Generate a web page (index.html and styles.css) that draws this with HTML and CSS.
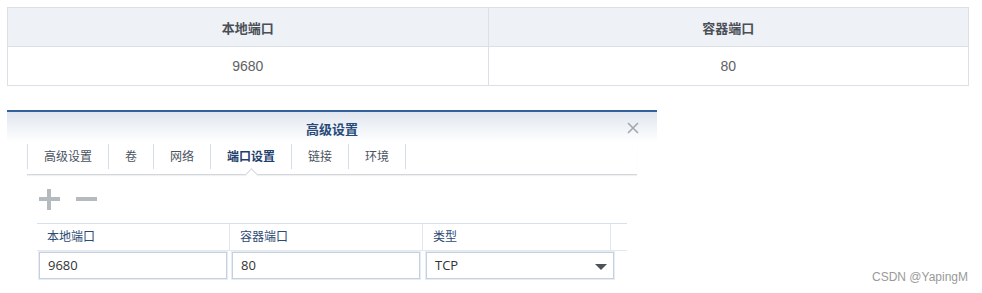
FILE: index.html
```html
<!DOCTYPE html>
<html lang="zh-CN">
<head>
    <meta charset="UTF-8">
    <title>端口设置</title>
    <link rel="stylesheet" href="styles.css">
</head>
<body>
<div class="page">
    <!--上方表格-->
    <table class="ports">
        <thead>
            <tr><th>本地端口</th><th>容器端口</th></tr>
        </thead>
        <tbody>
            <tr><td>9680</td><td>80</td></tr>
        </tbody>
    </table>

    <!--高级设置弹窗-->
    <div class="dialog">
        <div class="dlg-head">
            <span class="dlg-title">高级设置</span>
            <svg class="dlg-close" width="12" height="12" viewBox="0 0 12 12">
                <path d="M1 1L11 11M11 1L1 11" stroke="#a3a8ae" stroke-width="1.6" fill="none"/>
            </svg>
        </div>

        <ul class="tabs">
            <li>高级设置</li>
            <li>卷</li>
            <li>网络</li>
            <li class="active">端口设置</li>
            <li>链接</li>
            <li>环境</li>
        </ul>

        <div class="toolbar">
            <span class="btn-add"></span>
            <span class="btn-del"></span>
        </div>

        <div class="grid">
            <div class="grid-head">
                <div class="cell">本地端口</div>
                <div class="cell">容器端口</div>
                <div class="cell">类型</div>
                <div class="cell"></div>
            </div>
            <div class="grid-row">
                <div class="inp">9680</div>
                <div class="inp">80</div>
                <div class="inp select">TCP<span class="arrow"></span></div>
            </div>
        </div>
    </div>
</div>
<div class="mark">CSDN @YapingM</div>
</body>
</html>
```

FILE: styles.css
```css
*{
    margin: 0;
    padding: 0;
    list-style: none;
    box-sizing: border-box;
}
body{
    width: 982px;
    height: 293px;
    position: relative;
    background: #fff;
    font-family: "Open Sans", "Noto Sans CJK SC", sans-serif;
}
.page{
    padding: 7px;
}

/* 上方表格 */
.ports{
    width: 962px;
    border-collapse: collapse;
    font-family: "Liberation Sans", "Noto Sans CJK SC", sans-serif;
    font-size: 13px;
}
.ports th,
.ports td{
    border: 1px solid #dcdfe6;
    height: 39px;
    text-align: center;
    width: 50%;
}
.ports th{
    background-color: #eef1f5;
    color: #4a4f57;
    font-weight: bold;
}
.ports td{
    font-size: 14px;
    color: #606266;
}

/* 弹窗 */
.dialog{
    width: 650px;
    margin-top: 24px;
    border-top: 2px solid #33619c;
    background: linear-gradient(#e0e6ef, #fff 30px);
}
.dlg-head{
    height: 32px;
    display: flex;
    align-items: center;
    justify-content: center;
    position: relative;
}
.dlg-title{
    font-size: 13px;
    font-weight: bold;
    color: #274a78;
}
.dlg-close{
    position: absolute;
    right: 18px;
    top: 10px;
}

.tabs{
    display: flex;
    margin: 0 20px;
    height: 31px;
    border-bottom: 1px solid #d3d6da;
    box-shadow: 0 1px 1px rgba(0,0,0,.06);
    font-size: 12px;
}
.tabs li{
    position: relative;
    height: 25px;
    line-height: 25px;
    padding: 0 16px;
    border-left: 1px solid #d6dee8;
    color: #4b5460;
}
.tabs li:last-child{
    border-right: 1px solid #d6dee8;
}
.tabs .active{
    color: #1f3f6e;
    font-weight: 600;
}
/* 当前标签下的小箭头 */
.tabs .active::after{
    content: "";
    position: absolute;
    left: 50%;
    bottom: -10px;
    width: 8px;
    height: 8px;
    margin-left: -4px;
    background: #fff;
    border-left: 1px solid #d3d6da;
    border-top: 1px solid #d3d6da;
    transform: rotate(45deg);
}

.toolbar{
    display: flex;
    align-items: center;
    gap: 16px;
    height: 48px;
    padding-left: 32px;
}
.btn-add,
.btn-del{
    position: relative;
    width: 21px;
    height: 21px;
}
.btn-add::before,
.btn-del::before{
    content: "";
    position: absolute;
    left: 0;
    right: 0;
    top: 8px;
    height: 4px;
    background: #b5babf;
}
.btn-add::after{
    content: "";
    position: absolute;
    top: 0;
    bottom: 0;
    left: 8px;
    width: 4px;
    background: #b5babf;
}

.grid{
    margin-left: 30px;
    width: 590px;
    font-size: 12px;
}
.grid-head,
.grid-row{
    display: grid;
    grid-template-columns: 193px 193px 188px 16px;
}
.grid-head{
    border-top: 1px solid #d8e1ea;
    border-bottom: 1px solid #e3e9ef;
    height: 28px;
}
.grid-head .cell{
    line-height: 26px;
    padding-left: 10px;
    border-right: 1px solid #dfe6ee;
    color: #2c4a72;
}
.grid-head .cell:last-child{
    border-right: none;
}
.grid-row{
    padding-top: 1px;
}
.inp{
    height: 27px;
    line-height: 25px;
    margin: 0 3px 0 2px;
    padding-left: 8px;
    border: 1px solid #c7d1dc;
    box-shadow: 0 0 0 1px #e4ecf5;
    font-size: 13px;
    color: #333;
}
.select{
    position: relative;
    margin: 0 -3px 0 3px;
}
.arrow{
    position: absolute;
    right: 6px;
    top: 11px;
    border-left: 6px solid transparent;
    border-right: 6px solid transparent;
    border-top: 6px solid #4d5259;
}

.mark{
    position: absolute;
    right: 14px;
    bottom: 9px;
    font-family: "Liberation Sans", sans-serif;
    font-size: 12px;
    color: #9a9a9a;
}
```
